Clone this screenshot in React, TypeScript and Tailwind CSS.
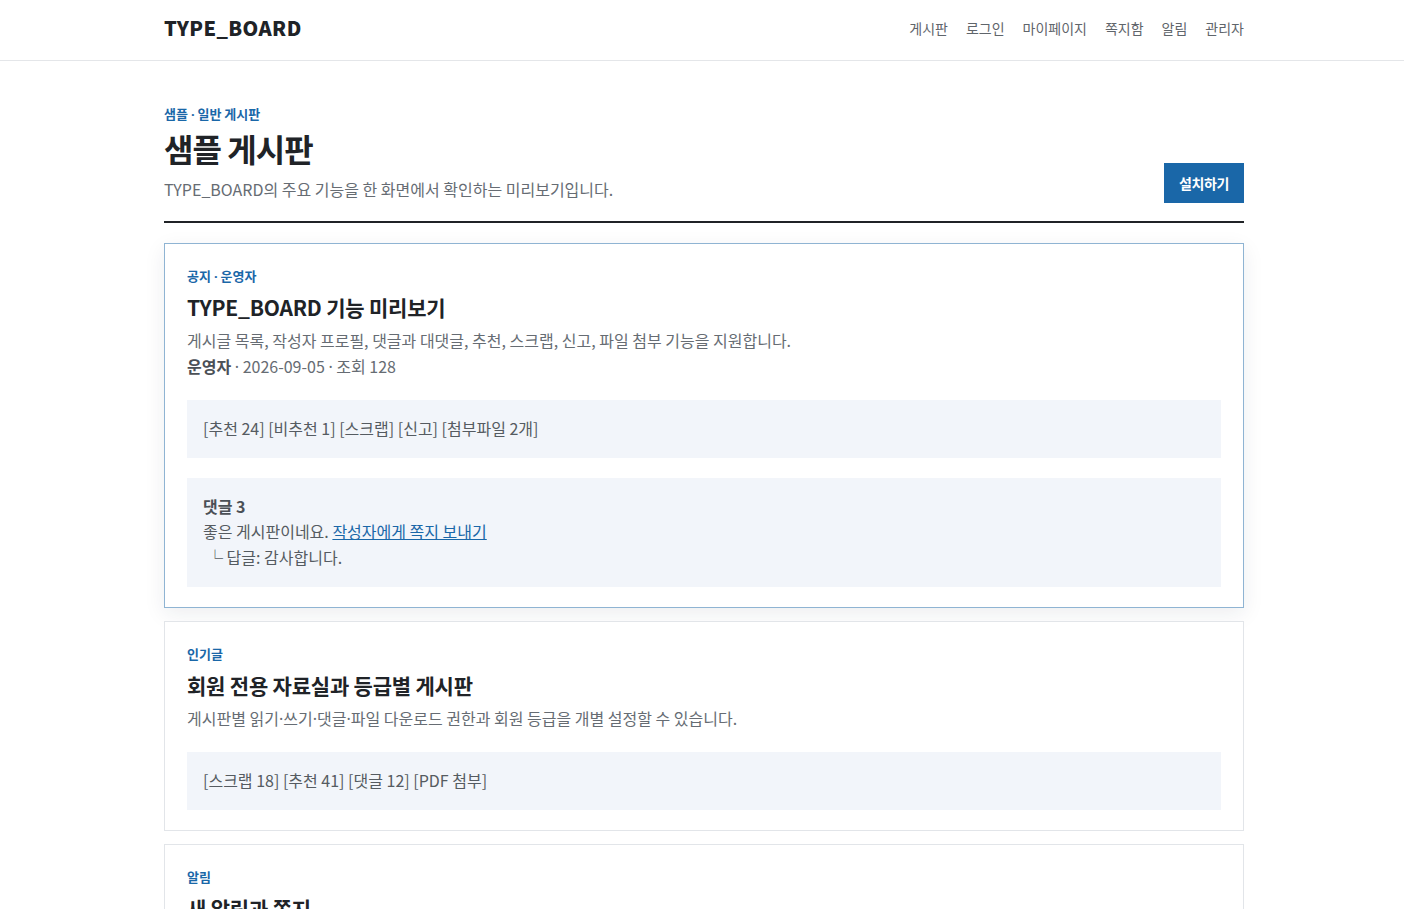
const posts = [
  {
    tag: "공지 · 운영자",
    title: "TYPE_BOARD 기능 미리보기",
    desc: "게시글 목록, 작성자 프로필, 댓글과 대댓글, 추천, 스크랩, 신고, 파일 첨부 기능을 지원합니다.",
    meta: true,
    stats: "[추천 24] [비추천 1] [스크랩] [신고] [첨부파일 2개]",
    comments: true,
    featured: true,
  },
  {
    tag: "인기글",
    title: "회원 전용 자료실과 등급별 게시판",
    desc: "게시판별 읽기·쓰기·댓글·파일 다운로드 권한과 회원 등급을 개별 설정할 수 있습니다.",
    stats: "[스크랩 18] [추천 41] [댓글 12] [PDF 첨부]",
  },
  {
    tag: "알림",
    title: "새 알림과 쪽지",
    desc: "댓글, 답글, 추천, 쪽지 수신 시 알림을 받아볼 수 있습니다.",
    stats: "[새 알림 3] [읽지 않은 쪽지 1]",
  },
];

const navItems = ["게시판", "로그인", "마이페이지", "쪽지함", "알림", "관리자"];

// the CJK font's middle dot is wide; the reference shows a narrow latin one
function dots(text: string) {
  const parts = text.split("·");
  return parts.map((part, i) => (
    <span key={i}>
      {part}
      {i < parts.length - 1 && <span className="font-['Noto_Sans',sans-serif] leading-none">·</span>}
    </span>
  ));
}

function PostCard({ post }: { post: (typeof posts)[number] }) {
  return (
    <article
      className={
        post.featured
          ? "border border-[#8fb4d3] bg-white px-[22px] pt-[22px] pb-5 shadow-[0_6px_20px_rgba(20,40,70,0.08)]"
          : "border border-[#e2e5e9] bg-white px-[22px] pt-[22px] pb-5"
      }
    >
      <p className="text-[13px] font-bold leading-5 text-[#1a67a8]">{dots(post.tag)}</p>
      <h2 className="mt-[6px] text-[21px] font-bold leading-[30px] tracking-[-0.01em] text-[#202327]">
        {post.title}
      </h2>
      <p className="mt-[6px] text-base leading-[1.6] text-[#666c73]">{dots(post.desc)}</p>
      {post.meta && (
        <p className="text-base leading-[1.6] text-[#666c73]">
          <b className="font-bold text-[#4b5056]">운영자</b>
          {dots(" · 2026-09-05 · 조회 128")}
        </p>
      )}
      <div className="mt-[21px] bg-[#f2f5fa] px-4 py-4 text-base leading-[1.6] text-[#555b61]">
        {post.stats}
      </div>
      {post.comments && (
        <div className="mt-5 bg-[#f2f5fa] px-4 py-4 text-base leading-[1.6] text-[#555b61]">
          <p className="font-bold text-[#4b5056]">댓글 3</p>
          <p>
            좋은 게시판이네요.{" "}
            <a href="#" className="text-[#1a67a8] underline">
              작성자에게 쪽지 보내기
            </a>
          </p>
          <p className="pl-1">└ 답글: 감사합니다.</p>
        </div>
      )}
    </article>
  );
}

export default function App() {
  return (
    <div className="min-h-screen bg-white font-['Noto_Sans_CJK_KR','Noto_Sans',sans-serif] text-[#202327]">
      <header className="border-b border-[#e4e6e9] pl-1">
        <div className="mx-auto flex h-[60px] w-[1080px] items-center justify-between pb-[5px]">
          <a href="#" className="text-[20px] font-black tracking-[0.02em] text-[#202327]">
            TYPE_BOARD
          </a>
          <nav className="flex items-center gap-[18px]">
            {navItems.map((item) => (
              <a key={item} href="#" className="text-sm text-[#5f656b]">
                {item}
              </a>
            ))}
          </nav>
        </div>
      </header>

      <div className="pl-1">
        <main className="mx-auto w-[1080px] pt-[43px]">
          <section className="flex items-end justify-between border-b-2 border-[#202327] pb-[18px]">
            <div>
              <p className="text-[13px] font-bold leading-5 text-[#1a67a8]">{dots("샘플 · 일반 게시판")}</p>
              <h1 className="text-[32px] font-bold leading-[48px] tracking-[-0.03em] text-[#202327]">
                샘플 게시판
              </h1>
              <p className="mt-[3px] text-base leading-7 text-[#666c73]">
                TYPE_BOARD의 주요 기능을 한 화면에서 확인하는 미리보기입니다.
              </p>
            </div>
            <button className="h-10 w-20 bg-[#1a67a8] text-sm font-bold tracking-[-0.03em] text-white">
              설치하기
            </button>
          </section>

          <div className="mt-5 flex flex-col gap-[13px] pb-10">
            {posts.map((p) => (
              <PostCard key={p.title} post={p} />
            ))}
          </div>
        </main>
      </div>
    </div>
  );
}
